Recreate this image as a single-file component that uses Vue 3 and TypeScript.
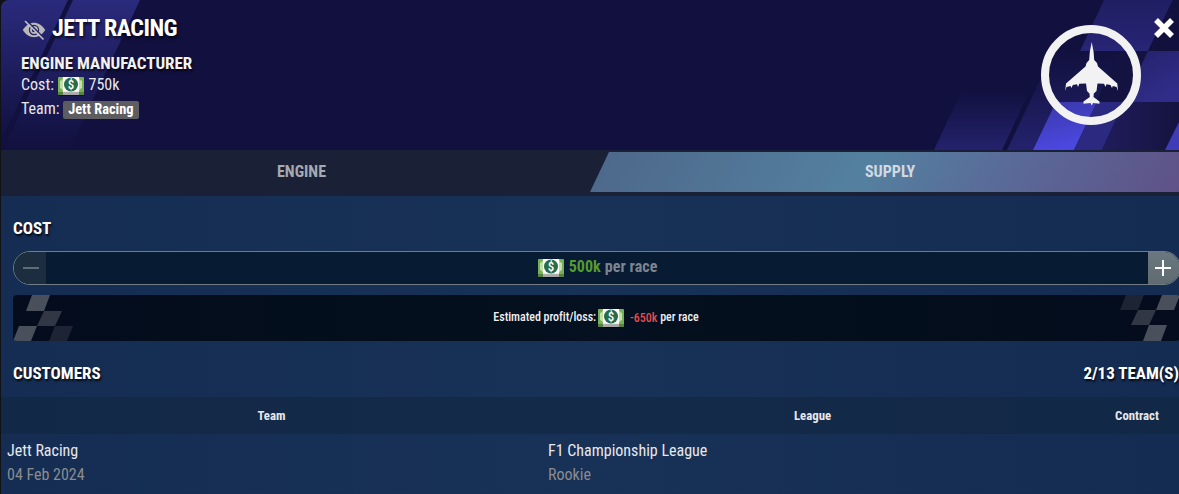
<template>
  <div class="panel">
    <!-- shared banknote background -->
    <svg class="sprite">
      <defs>
        <linearGradient id="paper" x1="0" y1="0" x2="0" y2="1">
          <stop offset="0" stop-color="#fff" />
          <stop offset="0.800" stop-color="#fff" />
          <stop offset="0.820" stop-color="#b4b4b4" />
          <stop offset="1" stop-color="#a2a2a2" />
        </linearGradient>
      </defs>
      <symbol id="note" viewBox="0 0 26 19">
        <rect x="0" y="1" width="26" height="18" rx="1" fill="#000" opacity=".4" />
        <rect width="26" height="18" rx="1" fill="#76b255" />
        <path d="M2 4 Q5 3 5 0 H21 Q21 3 24 4 V11 Q21 12 21 15 H5 Q5 12 2 11Z" fill="#c5dfae" />
        <path d="M0 15 H26 V17 Q26 18 25 18 H1 Q0 18 0 17Z" fill="#56833f" />
        <rect x="5" width="16" height="18" fill="url(#paper)" />
        <circle cx="13" cy="7.500" r="7" fill="#286d48" />
      </symbol>
    </svg>

    <header class="banner">
      <svg class="banner-art" viewBox="0 0 1179 150" preserveAspectRatio="none">
        <defs>
          <linearGradient id="leftFade" x1="0" y1="0" x2="0" y2="1">
            <stop offset="0" stop-color="#2a2a7c" />
            <stop offset="1" stop-color="#11103e" />
          </linearGradient>
          <linearGradient id="rise" x1="0" y1="0" x2="0" y2="1">
            <stop offset="0" stop-color="#11103e" />
            <stop offset="1" stop-color="#24226c" />
          </linearGradient>
          <linearGradient id="glow" x1="0" y1="0" x2="0.3" y2="1">
            <stop offset="0" stop-color="#3a37a8" />
            <stop offset="1" stop-color="#4b48e0" />
          </linearGradient>
          <linearGradient id="dusk" x1="0" y1="0" x2="1" y2="0">
            <stop offset="0" stop-color="#1f1c5c" />
            <stop offset="1" stop-color="#15133f" />
          </linearGradient>
          <linearGradient id="side" x1="0" y1="0" x2="0.6" y2="1">
            <stop offset="0" stop-color="#232168" />
            <stop offset="1" stop-color="#302d8a" />
          </linearGradient>
          <linearGradient id="upper" x1="0" y1="0" x2="0" y2="1">
            <stop offset="0" stop-color="#201e62" />
            <stop offset="1" stop-color="#272575" />
          </linearGradient>
        </defs>
        <!-- left stripes -->
        <path d="M0,0 H68 L0,143 Z" fill="url(#leftFade)" />
        <path d="M73,0 H140 L69,150 H3 Z" fill="url(#leftFade)" />
        <!-- right checker -->
        <path d="M962,90 H1030 L1002,150 H934 Z" fill="url(#rise)" />
        <path d="M1054,51 H1120 L1097,102 L1074,150 H1007 Z" fill="url(#rise)" />
        <path d="M1104,0 H1173 L1148,51 H1080 Z" fill="url(#upper)" />
        <path d="M1173,0 H1179 V51 H1148 Z" fill="#12103c" />
        <path d="M1120,51 H1148 L1124,102 H1096 Z" fill="#141241" />
        <path d="M1148,51 H1179 V102 H1124 Z" fill="url(#side)" />
        <path d="M1056,102 H1097 L1074,150 H1033 Z" fill="url(#glow)" />
        <path d="M1097,102 H1124 L1102,150 H1074 Z" fill="#2b2980" />
        <path d="M1124,102 H1179 V150 H1102 Z" fill="url(#dusk)" />
        <path d="M1179,122 V150 H1165 Z" fill="#3f3cb8" />
      </svg>
      <div class="intro">
        <h1 class="name">
          <svg class="eye" viewBox="0 0 24 22">
            <path d="M0.800 11 C4 6 8 3.800 12 3.800 S20 6 23.200 11 C20 16 16 18.200 12 18.200 S4 16 0.800 11Z" fill="#b9b9b9" />
            <circle cx="12" cy="11" r="4.600" fill="none" stroke="#22215f" stroke-width="1.200" />
            <path d="M12 8.800 A2.200 2.200 0 1 0 14.200 11 L12 11Z" fill="#22215f" />
            <path d="M4.300 1.200 L22.800 19.700" stroke="#25246c" stroke-width="1.500" />
            <path d="M3 2 L21.500 20.500" stroke="#c4c4c4" stroke-width="1.600" />
          </svg>
          <span>JETT RACING</span>
        </h1>
        <h2 class="role">ENGINE MANUFACTURER</h2>
        <p class="line">
          Cost:
          <svg class="cash" viewBox="0 0 26 19"><use href="#note" /><text x="13" y="12">$</text></svg>
          <span class="cost-value">750k</span>
        </p>
        <p class="line">Team: <span class="tag">Jett Racing</span></p>
      </div>
      <svg class="badge" viewBox="0 0 100 100">
        <circle cx="50" cy="50" r="46" fill="none" stroke="#f2f2f2" stroke-width="8" />
        <path
          d="M50.700 17 L52.600 27 L53.200 35 L56 38 L57 41.500 L76.300 58.500 L77 66 L75.500 62 L71.800 61 L71 63 L69.500 60 L65.500 59.300 L64.500 62 L63 58.800 L56.500 58.500 L55.500 66 L52.800 68.500 L52.500 72 L58.500 76.500 V78.700 L52 78 L50.700 80.500 L49.500 78 L42.500 78.700 V76.500 L48.800 72 L48.500 68.500 L46 66 L45 58.500 L38.300 58.800 L37 62 L36 59.300 L31.800 60 L30.500 63 L29.500 61 L25.500 62 L24.200 66 L25 58.500 L44.500 41.500 L45.500 38 L48.200 35 L48.800 27 Z"
          fill="#f2f2f2"
        />
      </svg>
      <svg class="close" viewBox="0 0 22 22">
        <path d="M3 3 L19 19 M19 3 L3 19" stroke="#fff" stroke-width="5.500" />
      </svg>
    </header>

    <nav class="tabs">
      <button class="tab">ENGINE</button>
      <button class="tab active">SUPPLY</button>
    </nav>

    <main class="content">
      <h3 class="heading cost-heading">COST</h3>
      <div class="stepper">
        <button class="step minus">
          <svg viewBox="0 0 16 16"><path d="M0 8 H16" /></svg>
        </button>
        <div class="amount">
          <svg class="cash" viewBox="0 0 26 19"><use href="#note" /><text x="13" y="12">$</text></svg>
          <span class="price">500k</span>
          <span>per race</span>
        </div>
        <button class="step plus">
          <svg viewBox="0 0 16 16"><path d="M0 8 H16 M8 0 V16" /></svg>
        </button>
      </div>
      <div class="estimate">
        <svg class="flag" viewBox="0 0 60 46">
          <path d="M19 0 H37 L31 16 H13Z" opacity=".28" />
          <path d="M31 16 H49 L42 31 H24Z" opacity=".18" />
          <path d="M6 31 H24 L18 46 H0Z" opacity=".28" />
          <path d="M42 31 H60 L54 46 H36Z" opacity=".1" />
        </svg>
        <p class="estimate-text">
          <span>Estimated profit/loss:</span>
          <svg class="cash" viewBox="0 0 26 19"><use href="#note" /><text x="13" y="12">$</text></svg>
          <span class="loss">-650k</span>
          <span>per race</span>
        </p>
        <svg class="flag" viewBox="0 0 60 46">
          <path d="M6 0 H24 L18 15 H0Z" opacity=".1" />
          <path d="M42 0 H60 L54 15 H36Z" opacity=".28" />
          <path d="M18 15 H36 L29 30 H11Z" opacity=".18" />
          <path d="M29 30 H47 L41 46 H23Z" opacity=".28" />
        </svg>
      </div>

      <div class="customers">
        <h3 class="heading">CUSTOMERS</h3>
        <h3 class="heading">2/13 TEAM(S)</h3>
      </div>
      <table class="table">
        <thead>
          <tr>
            <th class="col-wide">Team</th>
            <th class="col-wide">League</th>
            <th>Contract</th>
          </tr>
        </thead>
        <tbody>
          <tr v-for="customer in customers" :key="customer.team">
            <td>{{ customer.team }}<small>{{ customer.since }}</small></td>
            <td>{{ customer.league }}<small>{{ customer.tier }}</small></td>
            <td></td>
          </tr>
        </tbody>
      </table>
    </main>
  </div>
</template>

<script setup lang="ts">
interface Customer {
  team: string
  since: string
  league: string
  tier: string
}

const customers: Customer[] = [
  { team: 'Jett Racing', since: '04 Feb 2024', league: 'F1 Championship League', tier: 'Rookie' }
]
</script>

<style>
body { background: #101216; overflow: hidden; }
</style>

<style scoped>
.panel {
  box-sizing: border-box; width: 1179px; height: 494px; padding-left: 1px; overflow: hidden;
  font-family: "Roboto Condensed", Roboto, sans-serif; font-stretch: 75%;
  font-size: 16px; color: #e8e8ec;
}
h1, h2, h3, p { margin: 0; }
button { border: 0; padding: 0; font: inherit; font-stretch: inherit; color: inherit; }
.sprite { position: absolute; width: 0; height: 0; }
.cash { width: 26px; height: 19px; vertical-align: -6px; }
.cash text {
  font-size: 13px; font-weight: 500; font-stretch: 100%; letter-spacing: 0;
  text-anchor: middle; fill: #fff;
}

.banner {
  position: relative; height: 150px; overflow: hidden;
  background: #11103e; border-top-left-radius: 8px;
}
.banner-art { position: absolute; top: 0; left: -1px; width: 1179px; height: 150px; }
.intro { position: relative; padding: 12px 20px 0; }
.name {
  display: flex; align-items: center; gap: 6px; height: 32px;
  font-size: 24px; font-weight: 700; letter-spacing: -0.55px; color: #fff;
  text-shadow: 1px 2px 3px rgba(0,0,0,0.8);
}
.eye { width: 24px; height: 22px; margin: 4px 0 0 1px; }
.role {
  margin-top: 10px; font-size: 17px; line-height: 19px; font-weight: 700; color: #f2f2f2;
  text-shadow: 1px 2px 2px rgba(0,0,0,0.7);
}
.line { height: 24px; line-height: 24px; }
.cost-value { margin-left: 5px; }
.tag {
  display: inline-block; padding: 0 5px; border-radius: 2px; line-height: 18px;
  font-size: 14.4px; font-weight: 700; color: #fff; background: #5c5c61;
}
.badge { position: absolute; left: 1040px; top: 25px; width: 100px; height: 100px; }
.close { position: absolute; left: 1152px; top: 17px; width: 22px; height: 22px; }

.tabs { display: flex; height: 40px; padding: 2px 0 4px; background: #1a2136; }
.tab {
  flex: none; width: 601px; line-height: 38px; background: none;
  font-weight: 700; color: #a6a9b2;
}
.tab.active {
  width: 600px; margin-left: -12px; color: #d2d9e3;
  background: linear-gradient(120deg, #4d678a, #54809f 46%, #5a6797 72%, #5f5288 98%);
  clip-path: polygon(19px 0, 100% 0, 100% 100%, 0 100%);
}

.content {
  height: 298px;
  background: linear-gradient(90deg, #152d52, #183156 50%, #152c52);
}
.heading {
  font-size: 17px; line-height: 20px; font-weight: 700; color: #fff;
  text-shadow: 1px 2px 2px rgba(0,0,0,0.8);
}
.cost-heading { padding: 22px 12px 13px; }
.stepper {
  display: flex; box-sizing: border-box; width: 1168px; height: 34px; margin-left: 12px;
  border: 1px solid #707d84; border-radius: 17px; overflow: hidden; background: #071b33;
}
.step { display: grid; place-items: center; width: 32px; }
.step svg { width: 16px; height: 16px; stroke: #fff; stroke-width: 2; }
.minus { background: #1d2d40; }
.minus svg { stroke: #606c78; margin-left: 2px; }
.plus { background: linear-gradient(#6b7880, #5f6b6f); }
.plus svg { margin-right: 2px; }
.amount {
  display: flex; flex: 1; justify-content: center; gap: 4px; padding-left: 1px;
  line-height: 30px; font-weight: 700; letter-spacing: 0.05px; color: #7c858f;
}
.amount .cash { margin-top: 7px; }
.price { margin-left: 1px; color: #559b2f; }
.estimate {
  display: flex; justify-content: space-between; width: 1167px; height: 46px; margin: 10px 0 0 12px;
  border-radius: 4px; overflow: hidden;
  background: linear-gradient(90deg, #040c1d, #030f1c 35%, #051020 50%, #030f1c 65%, #040c1d);
}
.flag { width: 60px; height: 46px; fill: #fff; }
.estimate-text {
  display: flex; align-items: center; gap: 3px; height: 44px; padding-right: 1px;
  font-size: 12px; font-weight: 500; letter-spacing: -0.04px; color: #f0f0f2;
}
.estimate-text .cash { margin: 2px 0 0 -1px; }
.loss { margin-left: 3px; padding-top: 2px; color: #e84c50; }
.customers { display: flex; justify-content: space-between; padding: 22px 0 14px 12px; }

.table { width: 1190px; table-layout: fixed; border-collapse: collapse; }
th { height: 37px; padding: 0; font-size: 12.8px; font-weight: 700; background: rgba(15,35,60,0.5); }
.col-wide { width: 541px; }
td { padding: 5px 6px 0; line-height: 24px; }
small { display: block; font-size: 16px; color: #8b8c8f; }
</style>
